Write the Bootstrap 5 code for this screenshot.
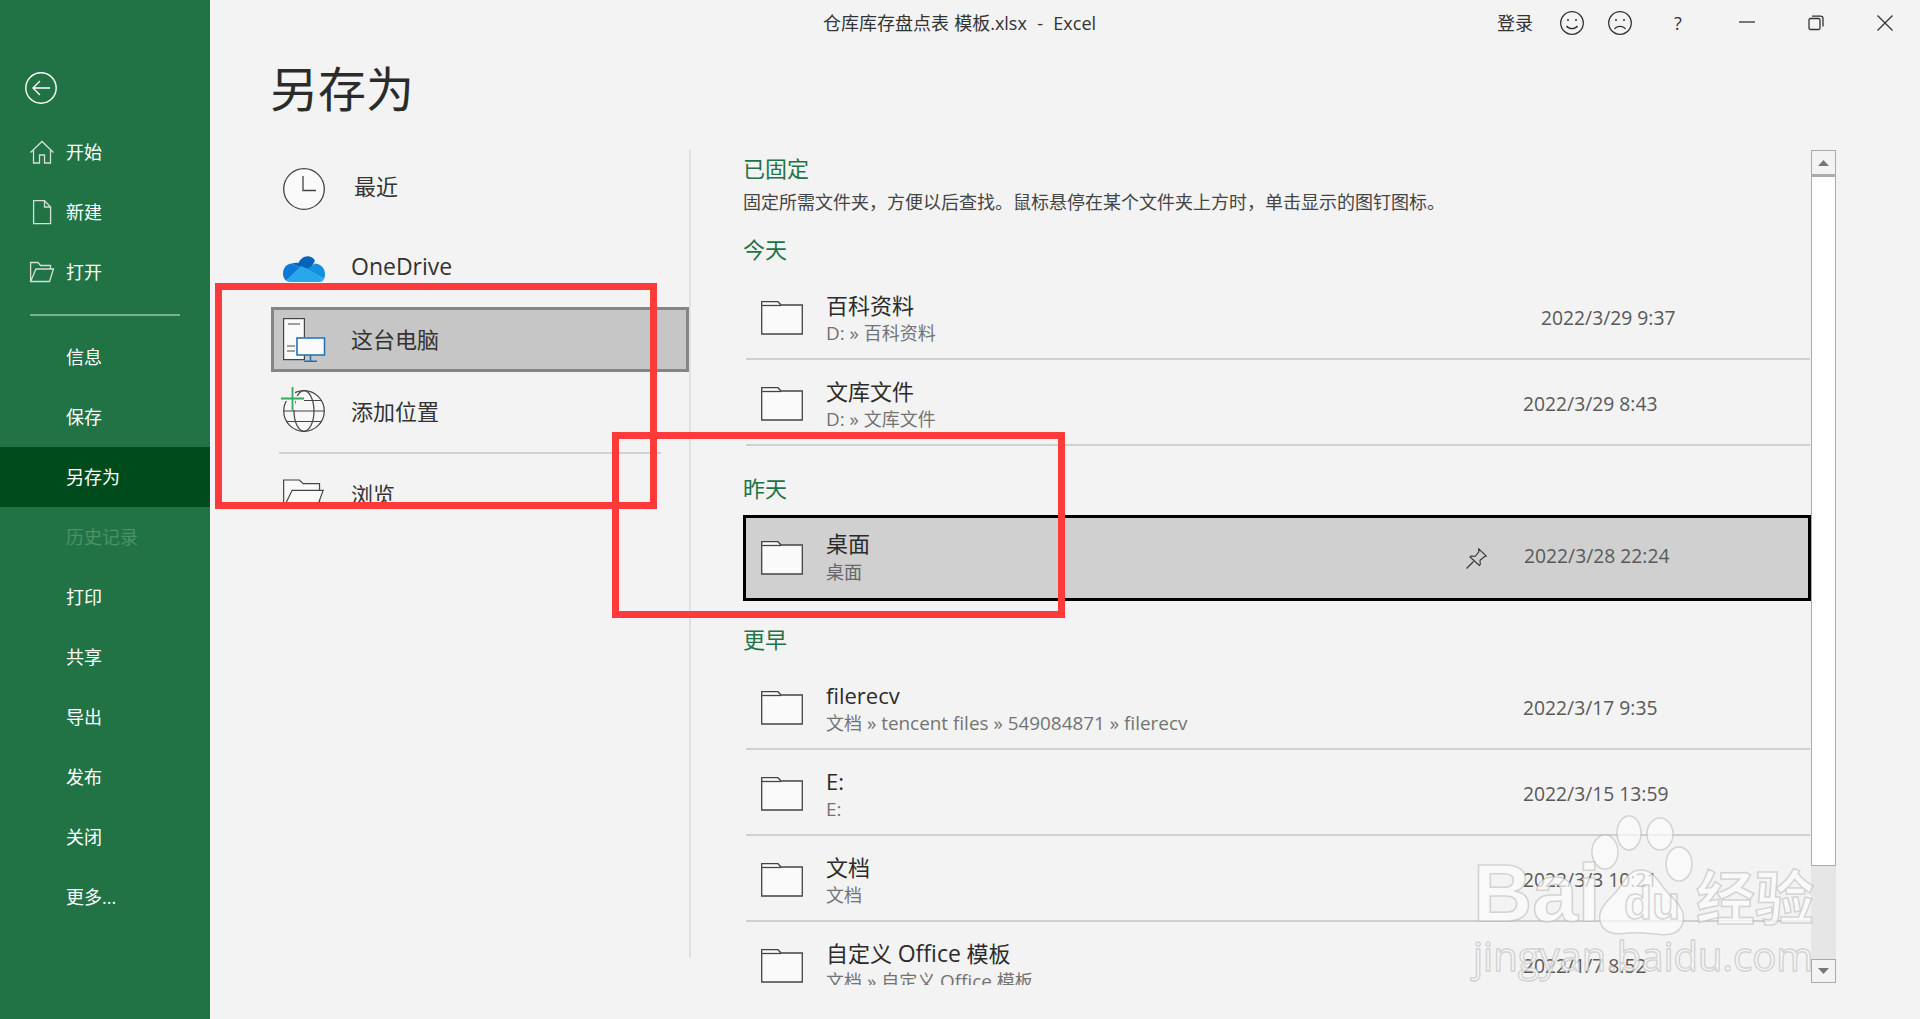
<!DOCTYPE html>
<html lang="zh-CN">
<head>
<meta charset="utf-8">
<title>另存为</title>
<link href="https://cdn.jsdelivr.net/npm/bootstrap@5.3.0/dist/css/bootstrap.min.css" rel="stylesheet">
<style>
html,body{height:1019px;overflow:hidden}
body{background:#f3f3f3;color:#2b2b2b;font-family:"Open Sans","Noto Sans CJK SC",sans-serif;position:relative}
svg{display:block;overflow:visible;flex:none}
.shell{height:1019px}
.rail{width:210px;background:#217346;flex:none}
.rail-back{height:122px;padding:72px 0 0 25px}
.rail-link{height:60px;padding-left:30px;color:#fff;font-size:18px;line-height:24px;text-decoration:none}
.rail-link.is-on{background:#004b1c}
.rail-link.is-off{color:#4c9168}
.rail-slot{width:36px;flex:none}
.rail-sep{height:2px;background:#7bb093;margin:12px 30px 11px;opacity:1;border:0}
.workspace{min-width:0}
.titlebar{height:46px;font-size:18px;line-height:24px;color:#333;padding-top:11px;padding-left:613px}
.doc-name{white-space:pre;word-spacing:.5px}
.tb-login{margin-right:27px}
.tb-smile{margin-right:24px}
.tb-frown{margin-right:40px}
.tb-help{width:12px;margin-right:55px;text-align:center}
.tb-min{margin-right:53px}
.tb-max{margin-right:53px}
.tb-close{margin-right:27px}
.tb-ctl{height:24px}
.page-title{font-size:48px;line-height:86px;height:84px;margin:0 0 19px 60px;font-weight:400;color:#2b2b2b}
.places{width:420px;margin-left:61px;height:809px;border-right:2px solid #e1e1e1;flex:none}
.place{padding-left:12px;font-size:22px;line-height:30px;color:#333}
.place-icon{width:42px;margin-right:26px;flex:none}
.place-recent{height:80px}
.place-recent span{margin-left:3px;margin-bottom:7px}
.place-drive{height:78px}
.place-drive span{font-size:23px;margin-bottom:4px}
.place-pc{height:65px;background:#c6c6c6;border:3px solid #858585;padding-left:9px}
.place-pc span{margin-bottom:2px}
.place-add{height:78px}
.place-sep{height:2px;background:#d2d2d2;margin:2px 28px 0 8px}
.place-browse{height:80px}
.recent{margin-left:52px;width:1093px}
.recent-scroll{width:1068px;height:836px;overflow:hidden;flex:none}
.group-h{height:40px;line-height:38px;font-size:22px;color:#217346}
.group-desc{height:26px;line-height:26px;font-size:18px;color:#444;margin-bottom:15px}
.gap-a{margin-bottom:4px}
.gap-b{margin-top:23px;margin-bottom:6px}
.gap-c{margin-top:19px;margin-bottom:4px}
.rec{height:86px;margin-left:3px;margin-right:1px;border-bottom:2px solid #d0d0d0;padding-left:15px}
.rec-sel{margin-left:0;margin-right:0;background:#d0d0d0;border:3px solid #000;padding-left:15px}
.rec-folder{width:42px;margin-right:23px;margin-top:4px}
.rec-sel .rec-folder{margin-top:0}
.rec-text{padding-top:17px;min-width:0}
.rec-sel .rec-text{padding-top:11px}
.rec-name{font-size:22px;line-height:28px;color:#2b2b2b;white-space:nowrap}
.rec-name .lat-wide{font-size:23px}
.rec-path{font-size:18.9px;line-height:24px;color:#737373;white-space:nowrap;margin-top:2px}
.rec-path .han{font-size:18px}
.rec-sel .rec-path{margin-top:3px;color:#666}
.rec-date{width:287px;font-size:19.3px;line-height:24px;color:#595959;flex:none;margin-top:4px}
.rec-sel .rec-date{width:284px;margin-top:0;margin-bottom:5px}
.rec-date.shifted{padding-left:18px}
.rec-pin{margin-right:37px}
.sbar{width:25px;height:833px;margin-top:1px;flex:none;background:#e6e6e6}
.sbar-btn{height:25px;background:#f3f3f3;border:1px solid #ababab}
.sbar-down{height:24px}
.sbar-thumb{height:691px;background:#fff;border:1px solid #ababab;border-top-width:2px}
.mark-box{position:absolute;border:7px solid #ff3a3a;pointer-events:none}
.mark-a{left:215px;top:283px;width:442px;height:226px}
.mark-b{left:612px;top:432px;width:453px;height:186px}
.wmark{position:absolute;left:1460px;top:810px;pointer-events:none}
.wm-big{font-family:"Liberation Sans",sans-serif;font-weight:700;font-size:82px}
.wm-cjk{font-family:"Noto Sans CJK SC",sans-serif;font-weight:700;font-size:59px}
.wm-url{font-family:"Open Sans",sans-serif;font-size:40px}
.wm-du{font-family:"Liberation Sans",sans-serif;font-weight:700;font-size:46px}
</style>
</head>
<body>
<div class="d-flex shell">
  <nav class="rail d-flex flex-column">
    <div class="rail-back">
      <svg width="32" height="32" viewBox="0 0 32 32" fill="none" stroke="#fff" stroke-width="1.4"><circle cx="16" cy="16" r="15.2"/><path d="M8 16H25M15 9l-7 7 7 7"/></svg>
    </div>
    <a class="rail-link d-flex align-items-center" href="#"><span class="rail-slot"><svg width="24" height="24" viewBox="0 0 24 24" fill="none" stroke="#d3dfd8" stroke-width="1.3"><path d="M0.5 12.5 12 1.5l11.5 11M3.5 10v13h6V15h5v8h6V10"/></svg></span>开始</a>
    <a class="rail-link d-flex align-items-center" href="#"><span class="rail-slot"><svg width="24" height="24" viewBox="0 0 24 24" fill="none" stroke="#d3dfd8" stroke-width="1.3"><path d="M3.6 0.6H14.5L20.6 7V23.6H3.6ZM14.5.6V7H20.6"/></svg></span>新建</a>
    <a class="rail-link d-flex align-items-center" href="#"><span class="rail-slot"><svg width="24" height="24" viewBox="0 0 24 24" fill="none" stroke="#d3dfd8" stroke-width="1.3"><path d="M.6 21.5V2.5H8l2.5 3H20.5V8.5M.6 21.5 6 9H23.5L19.5 21.5Z"/></svg></span>打开</a>
    <hr class="rail-sep">
    <a class="rail-link d-flex align-items-center" href="#"><span class="rail-slot"></span>信息</a>
    <a class="rail-link d-flex align-items-center" href="#"><span class="rail-slot"></span>保存</a>
    <a class="rail-link is-on d-flex align-items-center" href="#"><span class="rail-slot"></span>另存为</a>
    <a class="rail-link is-off d-flex align-items-center" href="#"><span class="rail-slot"></span>历史记录</a>
    <a class="rail-link d-flex align-items-center" href="#"><span class="rail-slot"></span>打印</a>
    <a class="rail-link d-flex align-items-center" href="#"><span class="rail-slot"></span>共享</a>
    <a class="rail-link d-flex align-items-center" href="#"><span class="rail-slot"></span>导出</a>
    <a class="rail-link d-flex align-items-center" href="#"><span class="rail-slot"></span>发布</a>
    <a class="rail-link d-flex align-items-center" href="#"><span class="rail-slot"></span>关闭</a>
    <a class="rail-link d-flex align-items-center" href="#"><span class="rail-slot"></span>更多...</a>
  </nav>

  <main class="workspace flex-grow-1 d-flex flex-column">
    <div class="titlebar d-flex">
      <div class="doc-name">仓库库存盘点表 模板.xlsx  -  Excel</div>
      <div class="d-flex ms-auto align-items-center tb-ctl">
        <span class="tb-login">登录</span>
        <svg class="tb-smile" width="24" height="24" viewBox="0 0 24 24" fill="none" stroke="#333" stroke-width="1.3"><circle cx="12" cy="12" r="11.3"/><circle cx="8" cy="9" r="1" fill="#333" stroke="none"/><circle cx="16" cy="9" r="1" fill="#333" stroke="none"/><path d="M6.5 15c2.5 3.4 8.5 3.4 11 0"/></svg>
        <svg class="tb-frown" width="24" height="24" viewBox="0 0 24 24" fill="none" stroke="#333" stroke-width="1.3"><circle cx="12" cy="12" r="11.3"/><circle cx="8" cy="9" r="1" fill="#333" stroke="none"/><circle cx="16" cy="9" r="1" fill="#333" stroke="none"/><path d="M6.5 18c2.5-3.6 8.5-3.6 11 0"/></svg>
        <span class="tb-help">?</span>
        <svg class="tb-min" width="16" height="16" viewBox="0 0 16 16" stroke="#333" stroke-width="1.3"><path d="M0 7H16"/></svg>
        <svg class="tb-max" width="16" height="16" viewBox="0 0 16 16" fill="none" stroke="#333" stroke-width="1.3"><rect x="1" y="3.5" width="11" height="11" rx="1.5"/><path d="M4 1.2H12.5A2.5 2.5 0 0 1 15 3.7V11.5"/></svg>
        <svg class="tb-close" width="16" height="16" viewBox="0 0 16 16" stroke="#333" stroke-width="1.3"><path d="M.5 .5 15.5 15.5M15.5 .5 .5 15.5"/></svg>
      </div>
    </div>
    <h1 class="page-title">另存为</h1>

    <div class="d-flex flex-grow-1">
      <div class="places">
        <div class="place place-recent d-flex align-items-center">
          <svg class="place-icon" width="42" height="42" viewBox="0 0 42 42" fill="#fafafa" stroke="#444" stroke-width="1.3"><circle cx="21" cy="21" r="20.3"/><path d="M20 8V22.5H33" fill="none"/></svg>
          <span>最近</span>
        </div>
        <div class="place place-drive d-flex align-items-center">
          <svg class="place-icon" width="42" height="28" viewBox="0 0 42 28"><path d="M15.5 9C18 2.500 27 -1 32 6.500L26 18 9 9.500C11 8.700 13.500 8.500 15.500 9Z" fill="#0364b8"/><path d="M9 9.500C3 9.800 0 14.500 0 19.500c0 3 1 5.500 3 7L18 14Z" fill="#0f78d4"/><path d="M32 9.500C36 9.500 42 13 42 20.500c0 1.500-.3 3-1 4.500L24 15Z" fill="#1490df"/><path d="M18 12 3 26.500C4.200 27.500 6 28 8 28H36c2.500 0 4.200-1.300 5-3L24 14.500Z" fill="#28a8ea"/></svg>
          <span>OneDrive</span>
        </div>
        <div class="place place-pc d-flex align-items-center">
          <svg class="place-icon" width="42" height="44" viewBox="0 0 42 44"><rect x=".6" y=".6" width="20.800" height="41" fill="#fafafa" stroke="#444" stroke-width="1.200"/><path d="M5 6H17M4 28H12M4 33H12" stroke="#444" stroke-width="1.200"/><rect x="13" y="19" width="29" height="18" fill="#c9d9e6" opacity=".7"/><rect x="14" y="20" width="27.500" height="17" fill="#fafafa" stroke="#1a6fb5" stroke-width="1.500"/><path d="M27.500 37V43M21 43.200H34" stroke="#1a6fb5" stroke-width="1.500"/></svg>
          <span>这台电脑</span>
        </div>
        <div class="place place-add d-flex align-items-center">
          <svg class="place-icon" width="42" height="42" viewBox="0 0 42 42" fill="none" stroke="#444" stroke-width="1.200"><circle cx="21" cy="21" r="20.300" fill="#f7f7f7"/><ellipse cx="21" cy="21" rx="10" ry="20.300"/><path d="M.7 21H41.300M3 10.500H39M3 31.500H39"/><path d="M-2 8.500H21M9.500 -3V20" stroke="#f3f3f3" stroke-width="5"/><path d="M-2 8.500H21M9.500 -3V20" stroke="#3aa860" stroke-width="1.800"/></svg>
          <span>添加位置</span>
        </div>
        <div class="place-sep"></div>
        <div class="place place-browse d-flex align-items-center">
          <svg class="place-icon" width="46" height="32" viewBox="0 0 46 32" fill="#fafafa" stroke="#444" stroke-width="1.300"><path d="M.7 31V.7H18l4 4H40V31Z"/><path d="M.7 31 10 12H44L37 31Z"/></svg>
          <span>浏览</span>
        </div>
      </div>

      <div class="recent d-flex">
        <div class="recent-scroll">
          <div class="group-h">已固定</div>
          <div class="group-desc">固定所需文件夹，方便以后查找。鼠标悬停在某个文件夹上方时，单击显示的图钉图标。</div>
          <div class="group-h gap-a">今天</div>
          <div class="rec d-flex align-items-center">
            <svg class="rec-folder" width="42" height="34" viewBox="0 0 42 34" fill="#fafafa" stroke="#444" stroke-width="1.300"><path d="M.7 33V.7H17l3 3.300H41.300V33Z"/><path d="M.7 4.500H20" fill="none"/></svg>
            <div class="rec-text flex-grow-1 align-self-start"><div class="rec-name">百科资料</div><div class="rec-path">D: » <span class="han">百科资料</span></div></div>
            <div class="rec-date shifted">2022/3/29 9:37</div>
          </div>
          <div class="rec d-flex align-items-center">
            <svg class="rec-folder" width="42" height="34" viewBox="0 0 42 34" fill="#fafafa" stroke="#444" stroke-width="1.300"><path d="M.7 33V.7H17l3 3.300H41.300V33Z"/><path d="M.7 4.500H20" fill="none"/></svg>
            <div class="rec-text flex-grow-1 align-self-start"><div class="rec-name">文库文件</div><div class="rec-path">D: » <span class="han">文库文件</span></div></div>
            <div class="rec-date">2022/3/29 8:43</div>
          </div>
          <div class="group-h gap-b">昨天</div>
          <div class="rec rec-sel d-flex align-items-center">
            <svg class="rec-folder" width="42" height="34" viewBox="0 0 42 34" fill="#fafafa" stroke="#444" stroke-width="1.300"><path d="M.7 33V.7H17l3 3.300H41.300V33Z"/><path d="M.7 4.500H20" fill="none"/></svg>
            <div class="rec-text flex-grow-1 align-self-start"><div class="rec-name">桌面</div><div class="rec-path"><span class="han">桌面</span></div></div>
            <svg class="rec-pin" width="21" height="21" viewBox="0 0 21 21" fill="none" stroke="#333" stroke-width="1.100"><path d="M.5 20.500 7.500 13.500M12.800 .8 20.300 8l-2 .8-4.300 3.400.3 4.300-1 1L4 9l1-1 4.300.3 3.400-4.300Z"/></svg>
            <div class="rec-date">2022/3/28 22:24</div>
          </div>
          <div class="group-h gap-c">更早</div>
          <div class="rec d-flex align-items-center">
            <svg class="rec-folder" width="42" height="34" viewBox="0 0 42 34" fill="#fafafa" stroke="#444" stroke-width="1.300"><path d="M.7 33V.7H17l3 3.300H41.300V33Z"/><path d="M.7 4.500H20" fill="none"/></svg>
            <div class="rec-text flex-grow-1 align-self-start"><div class="rec-name">filerecv</div><div class="rec-path"><span class="han">文档</span> » tencent files » 549084871 » filerecv</div></div>
            <div class="rec-date">2022/3/17 9:35</div>
          </div>
          <div class="rec d-flex align-items-center">
            <svg class="rec-folder" width="42" height="34" viewBox="0 0 42 34" fill="#fafafa" stroke="#444" stroke-width="1.300"><path d="M.7 33V.7H17l3 3.300H41.300V33Z"/><path d="M.7 4.500H20" fill="none"/></svg>
            <div class="rec-text flex-grow-1 align-self-start"><div class="rec-name">E:</div><div class="rec-path">E:</div></div>
            <div class="rec-date">2022/3/15 13:59</div>
          </div>
          <div class="rec d-flex align-items-center">
            <svg class="rec-folder" width="42" height="34" viewBox="0 0 42 34" fill="#fafafa" stroke="#444" stroke-width="1.300"><path d="M.7 33V.7H17l3 3.300H41.300V33Z"/><path d="M.7 4.500H20" fill="none"/></svg>
            <div class="rec-text flex-grow-1 align-self-start"><div class="rec-name">文档</div><div class="rec-path"><span class="han">文档</span></div></div>
            <div class="rec-date">2022/3/3 10:21</div>
          </div>
          <div class="rec d-flex align-items-center">
            <svg class="rec-folder" width="42" height="34" viewBox="0 0 42 34" fill="#fafafa" stroke="#444" stroke-width="1.300"><path d="M.7 33V.7H17l3 3.300H41.300V33Z"/><path d="M.7 4.500H20" fill="none"/></svg>
            <div class="rec-text flex-grow-1 align-self-start"><div class="rec-name">自定义 <span class="lat-wide">Office</span> 模板</div><div class="rec-path"><span class="han">文档</span> » <span class="han">自定义</span> Office <span class="han">模板</span></div></div>
            <div class="rec-date">2022/1/7 8:52</div>
          </div>
        </div>
        <div class="sbar d-flex flex-column">
          <div class="sbar-btn d-flex align-items-center justify-content-center"><svg width="11" height="6" viewBox="0 0 11 6"><path d="M5.500 0 11 6H0Z" fill="#777"/></svg></div>
          <div class="sbar-thumb"></div>
          <div class="flex-grow-1"></div>
          <div class="sbar-btn sbar-down d-flex align-items-center justify-content-center"><svg width="11" height="6" viewBox="0 0 11 6"><path d="M5.500 6 11 0H0Z" fill="#777"/></svg></div>
        </div>
      </div>
    </div>
  </main>
</div>

<div class="mark-box mark-a"></div>
<div class="mark-box mark-b"></div>

<svg class="wmark" width="370" height="180" viewBox="0 0 370 180">
  <g fill="#fbfbfb" fill-opacity=".72" stroke="#a8a8a8" stroke-opacity=".45" stroke-width="1.500">
    <ellipse cx="169" cy="23" rx="12" ry="17"/>
    <ellipse cx="200" cy="24" rx="13" ry="16"/>
    <ellipse cx="145" cy="42" rx="13" ry="17"/>
    <ellipse cx="219" cy="54" rx="13" ry="17"/>
    <path d="M181 60c14 0 18 14 28 24 12 12 16 18 14 28-3 13-15 14-28 12-9-1-17-2-26-1-13 2-26 1-29-12-2-10 4-17 14-27 10-10 13-24 27-24Z"/>
    <text class="wm-big" x="13" y="111">Bai</text>
    <text class="wm-du" x="164" y="109" fill="none">du</text>
    <text class="wm-cjk" x="236" y="110">经验</text>
    <text class="wm-url" x="13" y="161">jingyan.baidu.com</text>
  </g>
</svg>
<script src="https://cdn.jsdelivr.net/npm/bootstrap@5.3.0/dist/js/bootstrap.bundle.min.js"></script>
</body>
</html>
